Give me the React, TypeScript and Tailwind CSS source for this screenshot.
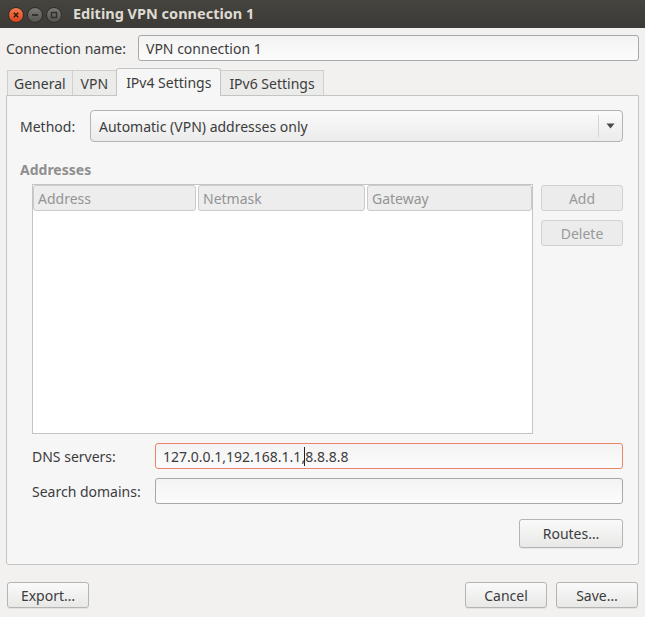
const font = { fontFamily: '"Noto Sans", "Open Sans", sans-serif' };

function WinButton({ kind }: { kind: 'close' | 'min' | 'max' }) {
  const bg =
    kind === 'close'
      ? 'bg-gradient-to-b from-[#f47a4d] to-[#d9441b] border-[#2e2d2a]'
      : 'bg-gradient-to-b from-[#7a7975] to-[#55544f] border-[#2e2d2a]';
  return (
    <div className={`w-[16px] h-[16px] rounded-full border flex items-center justify-center ${bg}`}>
      <svg width="10" height="10" viewBox="0 0 10 10">
        {kind === 'close' && (
          <path d="M2.8 2.8 L7.2 7.2 M7.2 2.8 L2.8 7.2" stroke="#3a1a0e" strokeWidth="1.6" />
        )}
        {kind === 'min' && <path d="M2 5 H8" stroke="#2f2e2b" strokeWidth="1.8" />}
        {kind === 'max' && <rect x="2.5" y="2.5" width="5" height="5" fill="none" stroke="#2f2e2b" strokeWidth="1.4" />}
      </svg>
    </div>
  );
}

function Btn({ children, className = '', disabled = false }: { children: React.ReactNode; className?: string; disabled?: boolean }) {
  return (
    <div
      className={`flex items-center justify-center rounded-[3px] border ${
        disabled
          ? 'border-[#d0d0d0] bg-[#ececec] text-[#9a9a9a]'
          : 'border-[#b4b4b4] bg-gradient-to-b from-[#fafafa] to-[#e8e8e7] text-[#3c3c3c] shadow-[0_1px_0_rgba(0,0,0,0.06)]'
      } ${className}`}
    >
      {children}
    </div>
  );
}

function Field({ value, className = '', focus = false }: { value?: React.ReactNode; className?: string; focus?: boolean }) {
  return (
    <div
      className={`flex items-center rounded-[3px] border px-[7px] bg-gradient-to-b from-[#f3f3f3] to-[#fcfcfc] ${
        focus ? 'border-[#e9866a]' : 'border-[#a8a8a8]'
      } ${className}`}
    >
      {value}
    </div>
  );
}

export default function App() {
  return (
    <div className="w-[645px] h-[617px] bg-[#f2f1f0] text-[14px] text-[#3c3c3c] flex flex-col overflow-hidden" style={font}>
      {/* title bar */}
      <div className="h-[28px] bg-gradient-to-b from-[#45443f] to-[#3b3a36] flex items-center pl-[8px] shrink-0">
        <div className="flex gap-[3px] mt-[2px]">
          <WinButton kind="close" />
          <WinButton kind="min" />
          <WinButton kind="max" />
        </div>
        <span className="ml-[11px] text-[14.5px] font-bold text-[#dfdbd2]">Editing VPN connection 1</span>
      </div>

      <div className="px-[6px] flex flex-col">
        <div className="flex items-center mt-[7px] h-[26px]">
          <span>Connection name:</span>
          <Field className="ml-auto w-[501px] h-[26px]" value="VPN connection 1" />
        </div>

        {/* tabs */}
        <div className="flex items-end mt-[7px] h-[27px] pl-px relative z-10">
          <div className="h-[25px] px-[6px] flex items-center border-t border-l border-[#cfcfcf] bg-[#ebebea]">General</div>
          <div className="h-[25px] px-[8px] flex items-center border-t border-l border-[#cfcfcf] bg-[#ebebea]">VPN</div>
          <div className="h-[28px] px-[9px] flex items-center border border-b-0 border-[#c4c4c4] rounded-t-[3px] bg-[#f6f6f6] -mb-px">
            IPv4 Settings
          </div>
          <div className="h-[25px] px-[8px] flex items-center border-t border-r border-[#cfcfcf] bg-[#ebebea]">IPv6 Settings</div>
        </div>

        {/* notebook page */}
        <div className="w-[633px] h-[470px] border border-[#c4c4c4] rounded-b-[3px] bg-[#f6f6f6] flex flex-col pl-[13px] pr-[15px]">
          <div className="flex items-center mt-[14px] h-[32px]">
            <span className="w-[70px]">Method:</span>
            <div className="flex-1 h-[32px] rounded-[4px] border border-[#b4b4b4] bg-gradient-to-b from-[#fbfbfb] to-[#ebebeb] flex items-center pl-[8px]">
              <span>Automatic (VPN) addresses only</span>
              <div className="ml-auto h-[22px] w-px bg-[#d4d4d4]" />
              <svg className="mx-[7px]" width="9" height="6" viewBox="0 0 9 6">
                <path d="M0.5 0.5 H8.5 L4.5 5.5 Z" fill="#4a4a4a" />
              </svg>
            </div>
          </div>

          <div className="mt-[18px] font-bold text-[#8f8f8f] h-[20px] leading-[20px]">Addresses</div>

          <div className="flex mt-[4px] pl-[12px]">
            <div className="w-[501px] h-[250px] border border-[#c4c4c4] bg-white flex flex-col">
              <div className="flex h-[26px] text-[#949494]">
                <div className="w-[163px] border border-[#cacaca] rounded-[3px] bg-[#ededed] flex items-center pl-[4px]">Address</div>
                <div className="w-[167px] ml-[2px] border border-[#cacaca] rounded-[3px] bg-[#ededed] flex items-center pl-[4px]">Netmask</div>
                <div className="w-[165px] ml-[2px] border border-[#cacaca] rounded-[3px] bg-[#ededed] flex items-center pl-[4px]">Gateway</div>
              </div>
            </div>
            <div className="ml-[8px] flex flex-col gap-[9px] pt-px">
              <Btn disabled className="w-[82px] h-[26px]">Add</Btn>
              <Btn disabled className="w-[82px] h-[26px]">Delete</Btn>
            </div>
          </div>

          <div className="flex items-center mt-[9px] pl-[12px] h-[26px]">
            <span className="w-[123px]">DNS servers:</span>
            <Field
              focus
              className="flex-1 h-[26px]"
              value={
                <span>
                  127.0.0.1,192.168.1.1,<span className="border-l border-[#222] -ml-px">8.8.8.8</span>
                </span>
              }
            />
          </div>
          <div className="flex items-center mt-[9px] pl-[12px] h-[26px]">
            <span className="w-[123px]">Search domains:</span>
            <Field className="flex-1 h-[26px]" />
          </div>

          <div className="flex justify-end mt-[15px]">
            <Btn className="w-[104px] h-[29px]">Routes…</Btn>
          </div>
        </div>

        {/* bottom buttons */}
        <div className="flex mt-[17px] pl-px">
          <Btn className="w-[82px] h-[26px]">Export…</Btn>
          <Btn className="w-[82px] h-[26px] ml-auto">Cancel</Btn>
          <Btn className="w-[82px] h-[26px] ml-[9px] mr-px">Save…</Btn>
        </div>
      </div>
    </div>
  );
}
